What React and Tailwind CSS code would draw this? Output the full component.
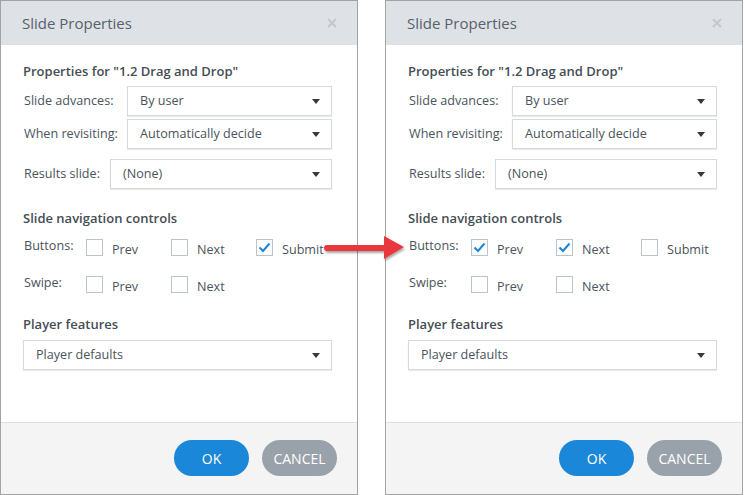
import React from "react";

const Caret = () => (
  <svg width="8" height="5" viewBox="0 0 8 5" className="shrink-0">
    <polygon points="0,0 8,0 4,5" fill="#333a40" />
  </svg>
);

const Select = ({ value, className = "" }) => (
  <div
    className={`flex items-center justify-between h-[30px] border border-[#d5dade] bg-white pl-[12px] pr-[11px] shadow-[0_1px_1px_rgba(0,0,0,0.08)] ${className}`}
  >
    <span className="text-[12.6px] text-[#4a535c] mt-[1px]">{value}</span>
    <Caret />
  </div>
);

const Check = ({ checked, label }) => (
  <div className="flex items-center w-[85px] h-[17px] shrink-0">
    <div className="w-[17px] h-[17px] border border-[#bcc3ca] bg-white flex items-center justify-center shrink-0">
      {checked && (
        <svg width="13" height="11" viewBox="0 0 13 11">
          <polyline points="1.5,5.5 5,9 11.5,1.5" fill="none" stroke="#1a85d6" strokeWidth="2" />
        </svg>
      )}
    </div>
    <span className="ml-[9px] text-[12.6px] leading-[17px] text-[#4a535c] mt-[3px]">{label}</span>
  </div>
);

const Label = ({ w, children }) => (
  <span className={`${w} shrink-0 pl-[1px] text-[12.6px] text-[#4a535c]`}>{children}</span>
);

const Dialog = ({ buttons }) => (
  <div className="w-[358px] h-[495px] border border-[#a3a3a3] bg-white flex flex-col shrink-0">
    <div className="h-[44px] bg-[#dee2e6] flex items-center justify-between pl-[21px] pr-[20px] shrink-0">
      <span className="text-[15px] text-[#56616b] mt-[1px]">Slide Properties</span>
      <svg width="10" height="10" viewBox="0 0 10 10">
        <path d="M1 1 L9 9 M9 1 L1 9" stroke="#c3c7cb" strokeWidth="1.8" />
      </svg>
    </div>
    <div className="flex flex-col pl-[22px] pr-[25px] pt-[16px]">
      <div className="h-[20px] leading-[20px] text-[13px] font-semibold text-[#454d55]">
        Properties for "1.2 Drag and Drop"
      </div>
      <div className="flex items-center mt-[5px]">
        <Label w="w-[104px]">Slide advances:</Label>
        <Select value="By user" className="flex-1" />
      </div>
      <div className="flex items-center mt-[3px]">
        <Label w="w-[104px]">When revisiting:</Label>
        <Select value="Automatically decide" className="flex-1" />
      </div>
      <div className="flex items-center mt-[10px]">
        <Label w="w-[87px]">Results slide:</Label>
        <Select value="(None)" className="flex-1" />
      </div>
      <div className="h-[20px] leading-[20px] mt-[19px] text-[13px] font-semibold text-[#454d55]">
        Slide navigation controls
      </div>
      <div className="flex items-start mt-[11px] h-[17px]">
        <span className="w-[63px] shrink-0 pl-[1px] text-[12.6px] text-[#4a535c] leading-[13px]">Buttons:</span>
        <Check checked={buttons[0]} label="Prev" />
        <Check checked={buttons[1]} label="Next" />
        <Check checked={buttons[2]} label="Submit" />
      </div>
      <div className="flex items-start mt-[20px] h-[17px]">
        <span className="w-[63px] shrink-0 pl-[1px] text-[12.6px] text-[#4a535c] leading-[13px]">Swipe:</span>
        <Check checked={false} label="Prev" />
        <Check checked={false} label="Next" />
      </div>
      <div className="h-[20px] leading-[20px] mt-[21px] text-[13px] font-semibold text-[#454d55]">
        Player features
      </div>
      <Select value="Player defaults" className="mt-[6px]" />
    </div>
    <div className="mt-auto h-[72px] border-t border-[#e0e0e0] bg-[#f4f4f4] flex items-center justify-end gap-[13px] pr-[20px] pb-[1px] shrink-0">
      <div className="w-[75px] h-[36px] rounded-full bg-[#1a87d8] flex items-center justify-center text-white text-[14px]">
        OK
      </div>
      <div className="w-[75px] h-[36px] rounded-full bg-[#99a2aa] flex items-center justify-center text-white text-[14px]">
        CANCEL
      </div>
    </div>
  </div>
);

export default function App() {
  return (
    <div className="relative w-[745px] h-[495px] bg-white flex gap-[27px] overflow-hidden font-['Open_Sans',sans-serif]">
      <Dialog buttons={[false, false, true]} />
      <Dialog buttons={[true, true, false]} />
      <svg
        className="absolute left-[318px] top-[230px]"
        width="95"
        height="40"
        viewBox="318 230 95 40"
      >
        <defs>
          <filter id="sh" x="-20%" y="-50%" width="140%" height="200%">
            <feDropShadow dx="1" dy="2" stdDeviation="1.2" floodColor="#000" floodOpacity="0.35" />
          </filter>
        </defs>
        <g filter="url(#sh)">
          <line x1="327" y1="248" x2="388" y2="248" stroke="#e8393e" strokeWidth="6" strokeLinecap="round" />
          <polygon points="384,236 404,247 384,259" fill="#e8393e" />
        </g>
      </svg>
    </div>
  );
}
